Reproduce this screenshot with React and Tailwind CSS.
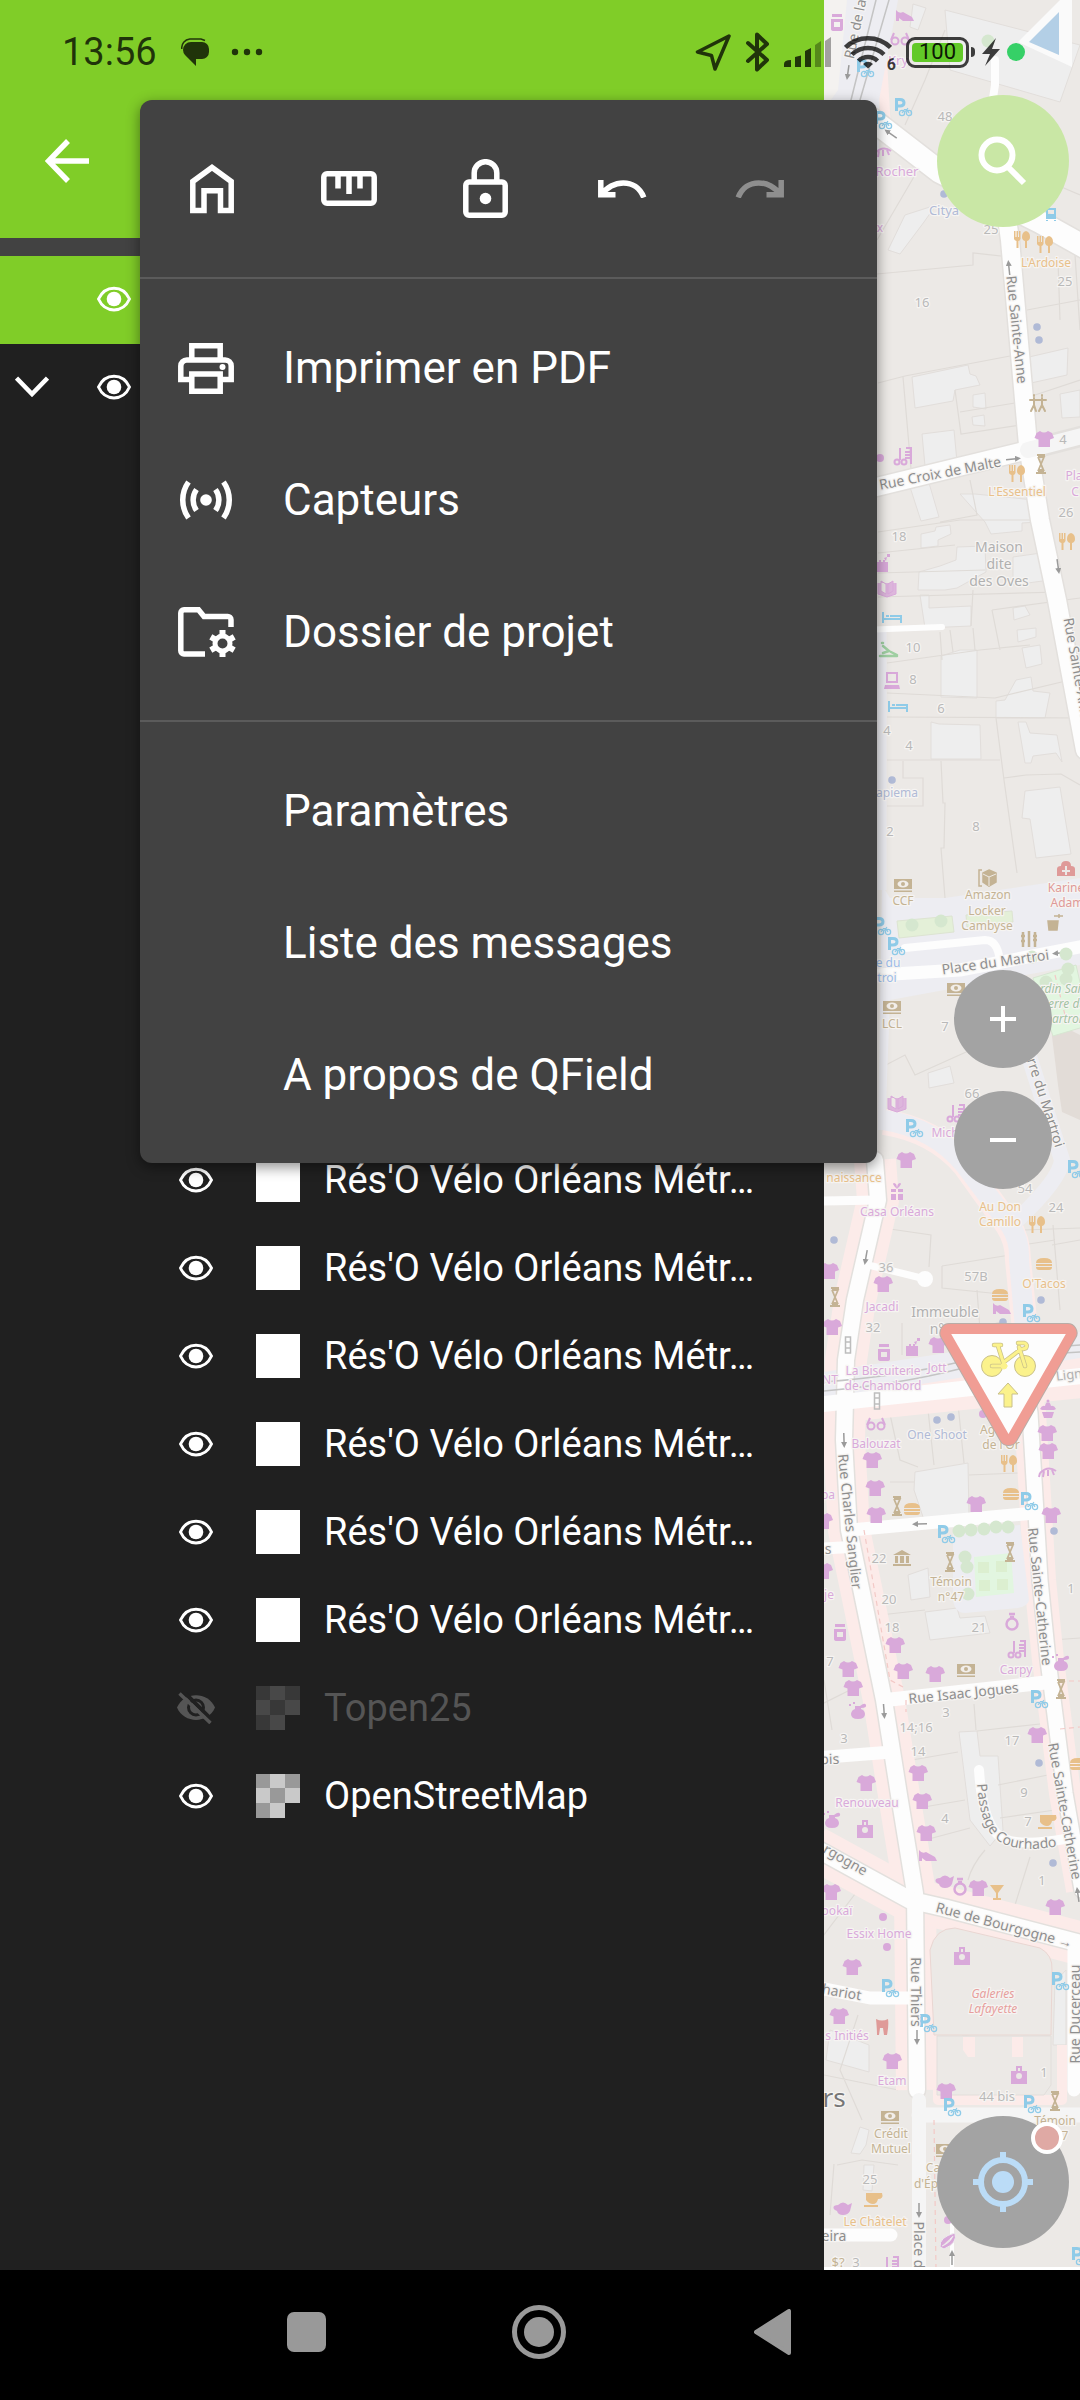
import React from "react";

/* ---------- status bar ---------- */

function StatusBar() {
  return (
    <header className="pointer-events-none absolute inset-x-0 top-0 z-20 flex h-[104px] items-center pl-[62px] pr-[55px] text-black/75">
      <span className="text-[38px] leading-none">13:56</span>
      <svg className="ml-[24px] h-[28px] w-[28px]" viewBox="0 0 28 28" fill="currentColor" aria-label="Message">
        <path d="M10 4H21a7 7 0 0 1 7 7v3a7 7 0 0 1-7 7h-6v7L4 17a8 8 0 0 1-2-5 8 8 0 0 1 8-8z" />
        <path d="M.800 11a9 9 0 0 1 8-10H20l4 1.500" fill="none" stroke="currentColor" strokeWidth="1.500" />
      </svg>
      <svg className="ml-[22px] h-[8px] w-[32px]" viewBox="0 0 32 8" fill="currentColor" aria-label="More notifications">
        <circle cx="4" cy="4" r="3.200" />
        <circle cx="16" cy="4" r="3.200" />
        <circle cx="28" cy="4" r="3.200" />
      </svg>
      <div className="ml-auto flex items-center">
        <svg className="h-[38px] w-[37px]" viewBox="0 0 37 38" fill="none" stroke="currentColor" strokeWidth="3.500" strokeLinejoin="round">
          <path d="M34 3 2.500 19l14 3.500L20 36z" />
        </svg>
        <svg className="ml-[13px] h-[40px] w-[26px]" viewBox="0 0 26 40" fill="none" stroke="currentColor" strokeWidth="4" strokeLinejoin="round" strokeLinecap="round">
          <path d="M3 11l19 17-10 9.500V2.500L22 12 3 29" />
        </svg>
        <svg className="ml-[13px] h-[32px] w-[48px]" viewBox="0 0 48 32" fill="currentColor">
          <path d="M0 31v-3q0-4 7-4v7zM11 31V21l6-1.500V31zM21 31V15l6-3v19z" />
          <path d="M31 31V9l6-4v26zM41 31V5l6-4v30z" opacity=".45" />
        </svg>
        <span className="relative ml-[12px] flex">
          <svg className="h-[34px] w-[48px]" viewBox="0 0 48 34" fill="none" stroke="currentColor" strokeWidth="4.500">
            <path d="M1.500 12.500a32 32 0 0 1 45 0M8 19.500a23 23 0 0 1 32 0M14.500 26a13.500 13.500 0 0 1 19 0" />
            <path d="M24 33.500l-5-4.500q5-4.500 10 0z" fill="currentColor" stroke="none" />
          </svg>
          <span className="absolute -bottom-1 -right-1 text-[16px] font-bold leading-none">6</span>
        </span>
        <span className="ml-[14px] flex items-center">
          <span className="flex h-[31px] w-[63px] items-center rounded-[9px] border-[3px] border-current p-[3px]">
            <span className="flex h-full w-full items-center justify-center rounded-[4px] bg-[#62c928] text-[22px] leading-none text-black/90">100</span>
          </span>
          <span className="ml-[2px] h-[10px] w-[4px] rounded-r bg-current" />
        </span>
        <svg className="ml-[6px] h-[28px] w-[20px]" viewBox="0 0 20 28" fill="currentColor">
          <path d="M15 0 1 16h8L4 28l15-17h-8z" />
        </svg>
        <span className="ml-[6px] h-[18px] w-[18px] rounded-full bg-[#36d067]" />
      </div>
    </header>
  );
}

/* ---------- layer drawer ---------- */

function Eye() {
  return (
    <svg className="h-[26px] w-[34px]" viewBox="0 0 34 26" aria-hidden="true">
      <path d="M1.500 13C8-1.500 26-1.500 32.500 13 26 27.500 8 27.500 1.500 13z" fill="none" stroke="currentColor" strokeWidth="3" />
      <circle cx="17" cy="13" r="7.300" fill="currentColor" />
    </svg>
  );
}

function EyeOff() {
  return (
    <svg className="h-[32px] w-[38px]" viewBox="0 0 38 32" aria-hidden="true">
      <path d="M0 15.500C7-1 31-1 38 15.500 31 32 7 32 0 15.500z" fill="currentColor" />
      <circle cx="19" cy="15.500" r="7.500" fill="none" stroke="#202020" strokeWidth="3" />
      <path d="M5-2 38 31" stroke="#202020" strokeWidth="4" />
      <path d="M2.500 1.500 33.500 31" stroke="currentColor" strokeWidth="3.500" />
    </svg>
  );
}

function Raster({ dim }) {
  const a = dim ? "#383838" : "#999999";
  const b = dim ? "#484848" : "#c9c9c9";
  return (
    <svg className="h-[44px] w-[44px]" viewBox="0 0 44 44" aria-hidden="true" shapeRendering="crispEdges">
      <path d="M0 0h14v14H0zM29 0h15v14H29zM14 14h15v15H14zM0 29h14v15H0z" fill={a} />
      <path d="M14 0h15v14H14zM0 14h14v15H0zM29 14h15v15H29zM14 29h15v15H14z" fill={b} />
    </svg>
  );
}

const layers = [
  ...Array.from({ length: 6 }, () => ({ name: "Rés'O Vélo Orléans Métr…", kind: "plain" })),
  { name: "Topen25", kind: "raster", hidden: true },
  { name: "OpenStreetMap", kind: "raster" },
];

function LayerDrawer() {
  return (
    <aside className="flex w-[76.3%] shrink-0 flex-col bg-[#202020] text-white">
      <div className="flex h-[238px] items-end bg-[#80cd28] pb-[43px] pl-[33px]">
        <button aria-label="Retour" className="flex h-[68px] w-[68px] items-center justify-center">
          <svg className="h-[44px] w-[44px]" viewBox="0 0 44 44" fill="none" stroke="currentColor" strokeWidth="5.500">
            <path d="M44 22H4M23 2 3.500 22 23 42" />
          </svg>
        </button>
      </div>
      <div className="h-[18px] bg-[#424242]" />
      <div className="flex h-[88px] items-center bg-[#80cd28] pb-[2px] pl-[97px]">
        <button aria-label="Visibilité"><Eye /></button>
      </div>
      <div className="flex h-[88px] items-center pb-[2px] pl-[15px]">
        <button aria-label="Replier">
          <svg className="h-[22px] w-[34px]" viewBox="0 0 34 22" fill="none" stroke="currentColor" strokeWidth="4.500">
            <path d="M1.500 2l15.500 16L32.500 2" />
          </svg>
        </button>
        <button aria-label="Visibilité" className="ml-[48px]"><Eye /></button>
      </div>
      <ul className="mt-[704px]">
        {layers.map((l, i) => (
          <li key={i} className={l.hidden ? "flex h-[88px] items-center pl-[176px] text-[#555555]" : "flex h-[88px] items-center pl-[176px]"}>
            <button aria-label="Visibilité" className="flex w-[40px] justify-center">{l.hidden ? <EyeOff /> : <Eye />}</button>
            <span className="ml-[40px] flex">
              {l.kind === "plain" ? <span className="h-[44px] w-[44px] bg-white" /> : <Raster dim={l.hidden} />}
            </span>
            <span className="ml-[24px] truncate text-[38px] leading-[48px]">{l.name}</span>
          </li>
        ))}
      </ul>
    </aside>
  );
}

/* ---------- menu ---------- */

const tools = [
  { label: "Accueil", w: 44, h: 50, d: "M2.800 46.500V17.500L22 3.500 41.200 17.500V46.500H30.500V26.800H14V46.500Z" },
  { label: "Mesurer", w: 56, h: 35, d: "M6 2.800H50a3.200 3.200 0 0 1 3.200 3.200V29a3.200 3.200 0 0 1-3.200 3.200H6A3.200 3.200 0 0 1 2.800 29V6A3.200 3.200 0 0 1 6 2.800ZM17 3V17.500M28 3V23M39 3V17.500" },
  { label: "Verrouiller", w: 45, h: 59, d: "M6 23H39a3.200 3.200 0 0 1 3.200 3.200V53a3.200 3.200 0 0 1-3.200 3.200H6A3.200 3.200 0 0 1 2.800 53V26.200A3.200 3.200 0 0 1 6 23ZM11.200 23V14a11.300 11.300 0 0 1 22.600 0V23", dot: [22.5, 39.5] },
  { label: "Annuler", w: 49, h: 18, d: "M2.800 0V14.800H17.500M4 14.500C13 0 38 -3 45.800 17.500" },
  { label: "Rétablir", w: 49, h: 18, d: "M46.200 0V14.800H31.500M45 14.500C36 0 11 -3 3.200 17.500", disabled: true },
];

function PrintIcon() {
  return (
    <svg width="56" height="51" viewBox="0 0 56 51" fill="none" stroke="currentColor" strokeWidth="5.500" aria-hidden="true">
      <path d="M13.800 17V2.800H42.200V17M13.800 36.500H2.800V23a6 6 0 0 1 6-6H47.200a6 6 0 0 1 6 6V36.500H42.200M13.800 31H42.200V48.200H13.800Z" />
      <circle cx="44.500" cy="24" r="3" fill="currentColor" stroke="none" />
    </svg>
  );
}

function SensorIcon() {
  return (
    <svg width="56" height="40" viewBox="0 0 56 40" fill="none" stroke="currentColor" strokeWidth="5.500" aria-hidden="true">
      <path d="M10.500 2A31 31 0 0 0 10.500 38M45.500 2A31 31 0 0 1 45.500 38M18.500 9.500A18 18 0 0 0 18.500 30.500M37.500 9.500A18 18 0 0 1 37.500 30.500" />
      <circle cx="28" cy="20" r="5.800" fill="currentColor" stroke="none" />
    </svg>
  );
}

function FolderIcon() {
  return (
    <svg width="58" height="51" viewBox="0 0 58 51" fill="none" stroke="currentColor" aria-hidden="true">
      <path d="M27 47H6a3.200 3.200 0 0 1-3.200-3.200V6A3.200 3.200 0 0 1 6 2.800H20.500L26 9.500H49.500A3.200 3.200 0 0 1 53 12.700V20" strokeWidth="5.500" />
      <circle cx="44.500" cy="36.500" r="7.500" strokeWidth="5" />
      <path d="M44.500 23V29M44.500 44V50M32.800 29.800 38 32.800M51 40.200 56.200 43.200M32.800 43.200 38 40.200M51 32.800 56.200 29.800" strokeWidth="6" />
    </svg>
  );
}

function MenuItem({ icon, children }) {
  return (
    <button role="menuitem" className="flex h-[132px] w-full items-center pl-[38px] text-left">
      <span className="flex w-[58px] shrink-0">{icon}</span>
      <span className="ml-[47px] text-[44px] leading-[52px]">{children}</span>
    </button>
  );
}

function Menu() {
  return (
    <div role="menu" className="absolute left-[140px] top-[100px] z-10 w-[737px] rounded-xl bg-[#424242] text-white shadow-[0_4px_14px_rgba(0,0,0,0.45)]">
      <div className="flex h-[177px] pl-[3px]">
        {tools.map((t) => (
          <button key={t.label} aria-label={t.label} disabled={t.disabled} className="flex w-[137px] items-center justify-center disabled:text-[#8e8e8e]">
            <svg width={t.w} height={t.h} viewBox={`0 0 ${t.w} ${t.h}`} fill="none" stroke="currentColor" strokeWidth="5.500" aria-hidden="true">
              <path d={t.d} />
              {t.dot && <circle cx={t.dot[0]} cy={t.dot[1]} r="5.800" fill="currentColor" stroke="none" />}
            </svg>
          </button>
        ))}
      </div>
      <div className="border-y-2 border-[#5b5b5b] pb-[22px] pt-[23px]">
        <MenuItem icon={<PrintIcon />}>Imprimer en PDF</MenuItem>
        <MenuItem icon={<SensorIcon />}>Capteurs</MenuItem>
        <MenuItem icon={<FolderIcon />}>Dossier de projet</MenuItem>
      </div>
      <div className="pb-[22px] pt-[23px]">
        <MenuItem>Paramètres</MenuItem>
        <MenuItem>Liste des messages</MenuItem>
        <MenuItem>A propos de QField</MenuItem>
      </div>
    </div>
  );
}

/* ---------- map ---------- */

const P = "#d9a9da";
const O = "#e8c08a";
const B = "#c4b394";
const S = "#8fcbe8";
const D = "#b0bad6";
const G = "#8e8e8e";
const N = "#b9b9b9";

const glyphs = {
  shirt: <path d="M-4-8q4 3 8 0l4 2 2 5-4 1.500V8H-5.500V.500l-4-1.500 2-5z" fill={P} />,
  fork: (
    <g fill={O}>
      <path d="M-8-8h1.500v6h1V-8h1.500v6h1V-8H-1.500v8q-1 2-2 2V9h-2V2q-2-.500-2.500-2z" />
      <path d="M4-8q4 1 4 6 0 3-3 4V9H3V2Q0 1 0-2q0-5 4-6z" />
    </g>
  ),
  park: (
    <g fill="none" stroke={S}>
      <path d="M-6.500 4V-7.500h3.500q4 0 4 3.200t-4 3.200H-6" strokeWidth="3" />
      <circle cx="-1" cy="6" r="2.600" strokeWidth="1.300" />
      <circle cx="6" cy="6" r="2.600" strokeWidth="1.300" />
      <path d="M-1 6 1.500 2.500H4L6 6M1.500 5.500 5 1" strokeWidth="1.200" />
    </g>
  ),
  dot: <circle r="3.800" fill={D} />,
  pdot: <circle r="4" fill={P} />,
  burger: <path d="M-8-1q0-5 8-5t8 5zM-8 0H8v2H-8zM-8 3H8q0 3-3 3H-5q-3 0-3-3z" fill={O} />,
  obelisk: <path d="M-4-9H4M-3-7 3-7-2.500 6h5L-3-7M-3 7H3M-5 9H5" fill="none" stroke={B} strokeWidth="1.800" />,
  bank: (
    <g>
      <path d="M-9-6H9V4H-9zM-9 5.500H9V7H-9z" fill={B} />
      <ellipse cy="-1" rx="5.500" ry="3.500" fill="#f2eeea" />
      <circle cy="-1" r="2" fill={B} />
    </g>
  ),
  book: <path d="M-6-7-1-4V6L-6 3zM6-7 1-4V6l5-3zM-9-5V6l9 3 9-3V-5" fill={P} stroke={P} strokeWidth="1" fillOpacity=".8" />,
  hair: (
    <g fill="none" stroke={P} strokeWidth="2">
      <path d="M-3-8V4M3-8H8V8M2-4H7M2-1H7M2 2H7" />
      <circle cx="-6" cy="6" r="2.500" />
      <circle cx="1" cy="6" r="2.500" />
    </g>
  ),
  bed: <path d="M-9-5V6M-9 2H9M9 6V-1H-2M-6-1H-3" fill="none" stroke={S} strokeWidth="2" />,
  laptop: <path d="M-6-8H6V3H-6zM-4-6V1H4V-6zM-7 5H7L8 9H-8z" fill={P} fillRule="evenodd" />,
  people: <path d="M-4-8v1M4-8v1M-8-3H8M-4-5V2L-7 8M-4 2l2 6M4-5V2L1 8M4 2 7 8" fill="none" stroke={B} strokeWidth="2" strokeLinecap="round" />,
  slide: <path d="M-7-7l1 0M-6-4 0 1-6 3M-9 6H8M2 2 8 5" fill="none" stroke="#9fcfa2" strokeWidth="2.500" strokeLinecap="round" />,
  luggage: <path d="M-6-1h3V-3H3V-1H6V9H-6zM-1-3h2V-1H-1zM5-9h3v3H5zM2-5l3-1-1 4z" fill={P} fillRule="evenodd" />,
  gift: <path d="M-6-3H-1V0H-6zM1-3H6V0H1zM-6 2H-1V8H-6zM1 2H6V8H1zM0-3q-6-6-3-6t3 6q0-6 3-6T0-3" fill={P} />,
  bag: <path d="M-8-4h5V-9H3v5H8V9H-8zM-1-4H1V-7H-1zM-3 1a3 3 0 1 0 6 0 3 3 0 1 0-6 0z" fill={P} fillRule="evenodd" />,
  perfume: <path d="M-7 3a6 6 0 0 1 4-5V-5H2q5-4 6-1T3-3V-2a6 6 0 0 1 4 5q0 5-7 5T-7 3zM-9-7h2v2h-2zM-5-9h2v2h-2z" fill={P} />,
  ring: (
    <g fill="none" stroke={P} strokeWidth="2.500">
      <circle cy="3" r="5.500" />
      <path d="M-3-7H3M-2-4H2" />
    </g>
  ),
  tea: <path d="M-5-3Q0-8 5-3L9-5 7 3Q5 7 0 7T-6 3q-5-2-3-5 2-1 4-1z" fill={P} />,
  cup: <path d="M-7-7H9q2 6-4 6-1 5-5 5t-7-4zM-9 5H5V7H-9z" fill={O} />,
  cake: <path d="M-8-1q2-4 5-3 1-4 3-4t3 4q3-1 5 3L6 0H-6zM-6 2H6L4 8H-4zM-1.500-9a1.500 1.500 0 1 0 3 0 1.500 1.500 0 1 0-3 0z" fill={P} />,
  cocktail: <path d="M-7-7H7L1 1V6H4V8H-4V6h3V1z" fill={O} />,
  bean: <path d="M-8 6Q-9-4 7-8 10 2-4 8zM-6 5Q2 2 5-5" fill={P} stroke="#eeeeee" strokeWidth="1" />,
  jar: <path d="M-5-8H5v3H-5zM-6-3H6V7q0 2-3 2H-3Q-6 9-6 7zM-3 0V5H3V0z" fill={P} fillRule="evenodd" />,
  shoe: <path d="M-9-6q3 4 7 2l9 5 2 4H-2L-6 2V5H-9z" fill={P} />,
  museum: <path d="M0-8 9-3H-9zM-7-2H-4V5H-7zM-2-2H2V5H-2zM4-2H7V5H4zM-9 6H9V8H-9z" fill={B} />,
  glasses: (
    <g fill="none" stroke={P} strokeWidth="2">
      <circle cx="-5" cy="2" r="3.500" />
      <circle cx="5" cy="2" r="3.500" />
      <path d="M-9 1-6-6M9 1 6-6" />
    </g>
  ),
  tree: <circle r="6.500" fill="#d5e7cf" />,
  signal: <path d="M-2.500-8H2.500V8H-2.500zM-2.500-3H2.500M-2.500 3H2.500" fill="none" stroke="#bdbdbd" strokeWidth="1.500" />,
  lash: <path d="M-8 1Q0-7 8-1M-8 1l-1 4M-4-1l-1 6M0-2V4M4-2l2 5" fill="none" stroke={P} strokeWidth="2" />,
  bus: <path d="M-5-6H5V5H-5zM-3-4V0H3V-4zM-5 6h2v1h-2zM3 6h2v1H3z" fill={S} fillRule="evenodd" />,
  tooth: <path d="M-6-8q6 3 12 0 1 6-1 16H2L1 1H-2l-1 7H-5Q-5 2-6-8z" fill="#df9a98" />,
  medic: <path d="M-9 7V0q0-3 4-3 0-5 5-5t5 5q4 0 4 3V7zM-1-3V1H-4V3H-1V6H1V3H4V1H1V-3z" fill="#df9a98" fillRule="evenodd" />,
  box: (
    <g stroke={B} strokeWidth="1.500">
      <path d="M-6-8h-3V8h3" fill="none" />
      <path d="M1-8 8-5V4L1 8-5 4V-5z" fill={B} />
      <path d="M-5-4 1-1 8-4M1-1V8" fill="none" stroke="#eeeae6" strokeWidth="1" />
    </g>
  ),
  toilets: <path d="M-6-7V8M0-8V8M6-7V8M-8-3H-4M4-3H8M-8 2h4M4 1h4" fill="none" stroke={B} strokeWidth="2.500" />,
  tap: <path d="M-8 0H2L1 9H-7zM-2-5H7M3-7V-3" fill={B} stroke={B} strokeWidth="1.500" />,
};

const marks = [
  ["shirt", 1044, 439], ["shirt", 906, 1160], ["shirt", 829, 1271], ["shirt", 883, 1284], ["shirt", 832, 1327],
  ["shirt", 938, 1345], ["shirt", 872, 1460], ["shirt", 875, 1488], ["shirt", 876, 1515], ["shirt", 976, 1504],
  ["shirt", 1047, 1433], ["shirt", 1048, 1451], ["shirt", 1051, 1515], ["shirt", 823, 1521], ["shirt", 823, 1571],
  ["shirt", 895, 1645], ["shirt", 903, 1671], ["shirt", 935, 1674], ["shirt", 848, 1669], ["shirt", 853, 1688],
  ["shirt", 1037, 1735], ["shirt", 918, 1773], ["shirt", 922, 1801], ["shirt", 926, 1833], ["shirt", 866, 1783],
  ["shirt", 978, 1888], ["shirt", 831, 1892], ["shirt", 1055, 1907], ["shirt", 852, 1967], ["shirt", 839, 2016],
  ["shirt", 892, 2061], ["shirt", 946, 2091],
  ["park", 903, 107], ["park", 883, 120], ["park", 865, 68], ["park", 882, 926], ["park", 896, 946], ["park", 914, 1128],
  ["park", 1076, 1169], ["park", 1031, 1313], ["park", 1029, 1501], ["park", 946, 1534], ["park", 1039, 1699],
  ["park", 890, 1988], ["park", 928, 2023], ["park", 952, 2107], ["park", 1032, 2104], ["park", 1060, 1981], ["park", 1080, 2256],
  ["fork", 1022, 239], ["fork", 1045, 244], ["fork", 1017, 473], ["fork", 1067, 541], ["fork", 1037, 1224], ["fork", 1009, 1463],
  ["dot", 1037, 327], ["dot", 1039, 340], ["dot", 944, 194], ["dot", 892, 780], ["dot", 834, 1240], ["dot", 1041, 1300],
  ["dot", 937, 1420], ["dot", 951, 1417], ["dot", 1054, 1531], ["dot", 1039, 1763], ["dot", 1053, 1863], ["dot", 1003, 1322],
  ["pdot", 880, 458], ["pdot", 883, 1917], ["pdot", 887, 1947], ["pdot", 948, 2220], ["pdot", 983, 1414],
  ["burger", 1044, 1264], ["burger", 1000, 1295], ["burger", 912, 1509], ["burger", 1011, 1494], ["burger", 1078, 1764],
  ["obelisk", 1041, 464], ["obelisk", 835, 1297], ["obelisk", 897, 1506], ["obelisk", 950, 1562], ["obelisk", 1010, 1552],
  ["obelisk", 1061, 1689], ["obelisk", 1055, 2101], ["people", 1038, 403],
  ["bank", 903, 885], ["bank", 892, 1007], ["bank", 956, 989], ["bank", 966, 1670], ["bank", 890, 2117], ["bank", 945, 2150],
  ["book", 887, 588], ["book", 897, 1103], ["hair", 903, 456], ["hair", 956, 1113], ["hair", 1017, 1649], ["hair", 890, 2265],
  ["bed", 892, 617], ["bed", 898, 706], ["laptop", 892, 680], ["slide", 889, 650], ["luggage", 882, 563], ["luggage", 912, 1347],
  ["gift", 897, 1192], ["bag", 962, 1956], ["bag", 1019, 2075],
  ["bag", 865, 1829], ["jar", 884, 1352], ["jar", 840, 1632], ["perfume", 858, 1711], ["perfume", 832, 1820], ["perfume", 1061, 1663],
  ["ring", 1012, 1621], ["ring", 960, 1886], ["tea", 945, 1881], ["tea", 843, 2208], ["cup", 1047, 1822], ["cup", 873, 2200],
  ["cocktail", 997, 1892], ["shoe", 928, 1856], ["shoe", 1002, 1309], ["shoe", 905, 16], ["museum", 902, 1558],
  ["glasses", 876, 1424], ["glasses", 900, 39], ["jar", 837, 22], ["bus", 1051, 214], ["tooth", 882, 2027], ["medic", 1066, 869],
  ["box", 988, 878], ["toilets", 1029, 939], ["tap", 1056, 921], ["signal", 848, 1345], ["signal", 877, 1401],
  ["lash", 883, 152], ["lash", 1048, 1472], ["cake", 1048, 1410], ["bean", 948, 2241], ["tree", 988, 41], ["tree", 912, 925], ["tree", 941, 921],
  ["tree", 1032, 957], ["tree", 1066, 954], ["tree", 1068, 969], ["tree", 1046, 982], ["tree", 1066, 979],
  ["tree", 959, 1531], ["tree", 971, 1530], ["tree", 984, 1529], ["tree", 996, 1527], ["tree", 1008, 1527],
  ["tree", 965, 1557], ["tree", 967, 1567], ["tree", 968, 1594],
];

/* text, centre x, baseline y, size, colour, rotation */
const labels = [
  ["48", 945, 121, 13, N], ["16", 922, 307, 13, N], ["25", 991, 234, 13, N], ["25", 1065, 286, 13, N],
  ["4", 1063, 444, 13, N], ["26", 1066, 517, 13, N], ["18", 899, 541, 13, N], ["10", 913, 652, 13, N],
  ["8", 913, 684, 13, N], ["6", 941, 713, 13, N], ["4", 887, 735, 13, N], ["4", 909, 750, 13, N], ["2", 890, 836, 13, N],
  ["8", 976, 831, 13, N], ["7", 945, 1031, 13, N], ["66", 972, 1098, 13, N], ["54", 1025, 1193, 13, N], ["24", 1056, 1212, 13, N],
  ["57B", 976, 1281, 13, N], ["36", 886, 1272, 13, N], ["32", 873, 1332, 13, N], ["22", 879, 1563, 13, N],
  ["20", 889, 1604, 13, N], ["18", 892, 1632, 13, N], ["21", 979, 1632, 13, N], ["1", 1071, 1593, 13, N],
  ["7", 830, 1666, 13, N], ["3", 946, 1717, 13, N], ["14;16", 916, 1732, 13, N], ["14", 918, 1756, 13, N],
  ["3", 844, 1743, 13, N], ["17", 1012, 1745, 13, N], ["9", 1024, 1797, 13, N], ["7", 1028, 1826, 13, N],
  ["4", 945, 1823, 13, N], ["1", 1042, 1885, 13, N], ["1", 1044, 2077, 13, N], ["44 bis", 997, 2101, 13, N],
  ["25", 870, 2184, 13, N], ["3", 856, 2267, 13, N],
  ["Kry", 898, 65, 13, P], ["Rocher", 897, 176, 13, P], ["Citya", 944, 215, 13, D], ["x", 880, 232, 12, P],
  ["L'Ardoise", 1046, 267, 12, O], ["L'Essentiel", 1017, 496, 12, O], ["Pla", 1074, 480, 12, P], ["C", 1075, 496, 12, P],
  ["Maison", 999, 552, 14, "#b0b0b0"], ["dite", 999, 569, 14, "#b0b0b0"], ["des Oves", 999, 586, 14, "#b0b0b0"],
  ["apiema", 897, 797, 12, D], ["CCF", 903, 905, 12, B], ["Amazon", 988, 899, 12, B], ["Locker", 987, 915, 12, B],
  ["Cambyse", 987, 930, 12, B], ["Karine", 1066, 892, 12, "#df9a98"], ["Adam", 1067, 907, 12, "#df9a98"],
  ["e du", 888, 967, 12, "#9dbdea"], ["troi", 887, 982, 12, "#9dbdea"], ["LCL", 892, 1028, 12, B],
  ["Michel", 950, 1137, 12, P], ["naissance", 854, 1182, 12, O], ["Casa Orléans", 897, 1216, 12, P],
  ["Au Don", 1000, 1211, 12, O], ["Camillo", 1000, 1226, 12, O], ["O'Tacos", 1044, 1288, 12, O], ["Jacadi", 882, 1311, 12, P],
  ["Immeuble", 945, 1317, 14, "#b0b0b0"], ["n°", 937, 1334, 14, "#b0b0b0"],
  ["La Biscuiterie", 883, 1375, 12, P], ["Jott", 937, 1372, 12, P], ["de Chambord", 883, 1390, 12, P], ["NT", 830, 1384, 12, P],
  ["One Shoot", 937, 1439, 12, D], ["Balouzat", 876, 1448, 12, P], ["pa", 828, 1499, 12, P],
  ["Agence", 1001, 1434, 12, B], ["de l'Or", 1001, 1449, 12, B],
  ["Témoin", 951, 1586, 12, B], ["n°47", 951, 1601, 12, B], ["je", 829, 1599, 12, P], ["Carpy", 1016, 1674, 12, P],
  ["Renouveau", 867, 1807, 12, P], ["ookaï", 837, 1915, 12, P], ["Essix Home", 879, 1938, 12, P],
  ["s Initiés", 847, 2040, 12, P], ["Etam", 892, 2085, 12, P], ["Crédit", 891, 2138, 12, B], ["Mutuel", 891, 2153, 12, B],
  ["Le Châtelet", 875, 2226, 12, O], ["Témoin", 1055, 2125, 12, B], ["7", 1065, 2140, 12, B], ["Ca", 933, 2172, 12, B],
  ["d'Ép", 926, 2188, 12, B], ["$?", 838, 2267, 13, B],
  ["Rue de la", 860, 30, 14, G, -78],
  ["Rue Sainte-Anne", 1012, 330, 14, G, 84], ["Rue Croix de Malte", 941, 478, 14, G, -11], ["Rue Sainte-Anne", 1073, 672, 14, G, 80],
  ["Place du Martroi", 996, 967, 14, G, -8], ["rre du Martroi", 1041, 1104, 14, G, 72],
  ["Rue Charles Sanglier", 845, 1522, 14, G, 84],
  ["Ligne A", 1079, 1378, 13, "#b0b0b0", -7], ["s", 828, 1554, 14, G], ["Rue Isaac Jogues", 964, 1698, 14, G, -6],
  ["Rue Sainte-Catherine", 1035, 1597, 14, G, 84], ["Rue Sainte-Catherine", 1060, 1812, 14, G, 80],
  ["ois", 830, 1764, 14, G, -2], ["rgogne", 843, 1864, 14, G, 30], ["Rue de Bourgogne →", 1003, 1930, 14, G, 15],
  ["hariot", 841, 1997, 14, G, 10], ["Rue Thiers", 911, 1992, 14, G, 90], ["Rue Ducerceau", 1080, 2014, 14, G, -90],
  ["eira", 834, 2241, 14, G], ["Place d", 914, 2245, 14, G, 90], ["rs", 834, 2107, 26, "#777777"],
];

const arrows = [
  [891, 134, 215], [1009, 268, 264], [1013, 459, -6], [1058, 566, 82], [1060, 953, 175], [866, 1257, 100],
  [844, 1440, 88], [920, 1524, 178], [884, 1711, 86], [917, 2037, 90], [919, 2210, 90], [848, 72, 98], [1078, 1895, 262],
  [952, 2258, 270],
];

const mainRoads =
  "M875 1160 878 1200 855 1300 846 1360 844 1440 849 1530 884 1700 899 1795 915 1893 917 2090";
const catherine = "M1027 1395 1030 1413 1040 1580 1048 1660 1065 1793 1082 1890";
const bourgogne = "M815 1848 910 1900 945 1908 1090 1946";

const blocks = [
  "M912 377 968 365 970 374 976 376 980 385 955 390 953 401 915 408z",
  "M922 434 954 430 957 462 925 466z", "M973 395 985 393 986 409 973 407z", "M972 417 984 415 985 426 973 425z",
  "M1029 357 1068 348 1067 375 1031 383z", "M1060 394 1080 390 1080 417 1062 418z",
  "M910 487 929 483 939 517 921 521z", "M960 494 975 494 1034 500 1038 522 1022 523 1022 531 991 534 985 522z",
  "M921 534 935 531 936 527 950 525 951 534 938 540 938 546 921 548z",
  "M919 572 940 566 956 560 957 547 985 546 986 572 957 588 945 590 918 590z",
  "M1013 557 1048 552 1050 580 1013 585z", "M920 595 929 595 929 608 971 606 971 626 925 628z",
  "M1013 608 1025 606 1030 615 1014 620z", "M1017 630 1036 628 1036 637 1018 642z", "M1022 648 1040 645 1042 664 1026 668z",
  "M941 656 960 650 977 650 977 698 941 697z", "M1016 680 1031 677 1033 691 1050 693 1045 718 996 718 996 701 1005 700z",
  "M931 722 939 724 980 725 981 759 931 759z", "M1018 722 1026 722 1030 733 1057 735 1062 762 1056 753 1033 756 1031 763 1025 763z",
  "M1025 791 1060 787 1071 854 1036 858 1030 819 1022 818z", "M928 1073 950 1066 954 1083 929 1088z",
  "M915 1472 968 1463 969 1515 924 1520 914 1490z", "M908 1575 928 1568 930 1597 911 1600z",
  "M925 1612 957 1608 960 1618 985 1616 990 1633 930 1640z", "M959 1732 977 1731 980 1756 998 1756 1003 1830 990 1846 970 1820z",
  "M913 4 926 8 918 30 910 27z", "M945 10 1080 45 1060 102 950 70z", "M936 205 924 222 900 254 888 250 905 215z",
  "M830 2030 869 2045 869 2072 826 2060z", "M860 2127 869 2130 866 2145 860 2154 851 2153z", "M864 2165 874 2165 872 2191 863 2190z",
  "M963 2035 975 2037 975 2056 965 2059z", "M1012 2037 1023 2037 1022 2058 1012 2056z", "M1055 1982 1066 1970 1066 2045 1053 2045z",
];

const parcels =
  "M877 274 973 265 973 253 1010 257M878 383 905 376 1010 356M903 377 912 480M955 390 961 434 1020 425M960 412 1015 403M1027 310 1080 300M1035 395 1080 380M970 480 977 515 940 522M878 532 960 520 1040 520M878 553 955 545M878 573 985 570M878 597 1060 592M971 626 973 590M992 610 1080 598M992 610 1000 650M940 632 942 660M950 630 953 652M973 628 975 650M887 663 980 650 1030 645M887 693 995 698 1070 680M887 717 1080 718M887 760 1000 760M996 718 1004 780 1017 873M941 761 943 803 945 803 944 848 941 848 945 898M903 761V778H923V806H887M1004 778 1026 775 1061 774 1080 785M884 1066 905 1055 915 1075 975 1048M890 1229 931 1235 929 1267M942 1266 1010 1255M942 1266V1288L1010 1295M902 1323V1355M977 1290 980 1330M888 1405 900 1460 918 1467M928 1410 934 1465M958 1404 964 1463M969 1475 1018 1473M890 1482 914 1482M1022 1245 1055 1240M1053 1225 1060 1310M1024 1230 1080 1228M1052 1245 1080 1240M880 1615 925 1610M1052 1640 1080 1638M912 1760 958 1752M918 1808 965 1800M925 1840 970 1828M974 1704 976 1730M977 1731 1040 1724M998 1785 1048 1775M1000 1818 1055 1810M1030 1857 1015 1905M985 1850Q972 1865 968 1880M830 1880 855 1894 820 1940M824 1680 832 1730M820 1705 850 1690M934 2038 1050 2036M975 2037V2094M1012 2037V2094M837 2165 862 2160 898 2165M834 2164 830 2215M858 2015 840 2070 862 2120M824 2075 898 2090M1045 180 1080 195M1058 260 1060 320M1075 255 1080 330M877 240 915 175M1000 1322 960 1335M905 125 925 80 945 30";

function BikeSign() {
  return (
    <g>
      <path d="M950 1329H1067a4 4 0 0 1 4 6L1012 1438a4 4 0 0 1-7 0L946 1335a4 4 0 0 1 4-6z" fill="#fdfdfd" stroke="#b9aca6" strokeWidth="12" strokeLinejoin="round" />
      <path d="M950 1329H1067a4 4 0 0 1 4 6L1012 1438a4 4 0 0 1-7 0L946 1335a4 4 0 0 1 4-6z" fill="#fdfdfd" stroke="#f09d94" strokeWidth="10" strokeLinejoin="round" />
      <g stroke="#c9c08a" strokeWidth="1" fill="#fbf28c">
        <circle cx="992" cy="1366" r="10.500" />
        <circle cx="1025" cy="1366" r="10.500" />
        <path d="M1008 1383 1018 1394H1012V1407H1004V1394H998z" />
      </g>
      <g fill="none" strokeLinecap="round" strokeLinejoin="round">
        <path d="M994 1345H1001M998 1346 1004 1365M1004 1362 1021 1349M1025 1366 1019 1347M1018 1343H1024q4 1 2 5l-3 1M992 1366H1004" stroke="#c9c08a" strokeWidth="4.500" />
        <path d="M994 1345H1001M998 1346 1004 1365M1004 1362 1021 1349M1025 1366 1019 1347M1018 1343H1024q4 1 2 5l-3 1M992 1366H1004" stroke="#fbf28c" strokeWidth="3" />
        <circle cx="1004" cy="1366" r="3" fill="#fbf28c" stroke="#fbf28c" />
      </g>
    </g>
  );
}

function MapCanvas() {
  return (
    <svg className="absolute inset-0 h-full w-full" viewBox="824 0 256 2270" preserveAspectRatio="xMinYMin slice" aria-label="Carte" fontFamily='"Noto Sans", sans-serif'>
      <rect x="824" y="0" width="256" height="2270" fill="#ece9e6" />
      <path d={blocks.join("")} fill="#eeeeee" stroke="#e2dedb" strokeWidth="1" />
      <path d={parcels} fill="none" stroke="#dfdbd7" strokeWidth="1.200" />

      {/* pavements and shopping streets */}
      <g fill="none" stroke="#fcebe9" strokeLinejoin="round">
        <path d={mainRoads} strokeWidth="42" />
        <path d={catherine} strokeWidth="32" />
        <path d={bourgogne} strokeWidth="44" />
        <path d="M815 1402 1090 1374" strokeWidth="46" />
        <path d="M882 60 886 130" strokeWidth="10" />
        <path d="M884 1122Q935 1130 965 1165L1008 1225Q1018 1240 1018 1260L1026 1340" strokeWidth="26" />
        <path d="M938 2040V2100H1062V2045" strokeWidth="10" />
      </g>
      <path d="M930 1950Q935 1928 955 1928L1040 1948Q1053 1955 1052 1970L1051 2035H934z" fill="#ece9e6" stroke="#ead6d2" />
      <path d="M937 2036H1051V2085L1044 2095H937z" fill="#ece9e6" stroke="#e2dedb" />
      <path d="M963 2037H975V2057H968L963 2050zM1012 2037H1023V2057H1012z" fill="#fcebe9" />

      {/* pedestrian surfaces */}
      <g fill="#ededf2">
        <path d="M847 0H898L879 100V160H824V100z" />
        <path d="M882 885 890 898 945 898 1080 878V965L890 1000 885 1130 878 1130z" />
        <path d="M824 1372 1080 1332V1358L824 1400z" />
        <path d="M953 1530 1020 1525 1029 1600Q1028 1606 1018 1608L965 1613Q955 1613 953 1600z" />
      </g>
      <path d="M824 0H847L838 90 824 110z" fill="#f4f2f0" />
      <g fill="none" stroke="#ededf2" strokeLinejoin="round">
        <path d="M884 1120Q935 1128 965 1165L1010 1225Q1020 1240 1019 1260L1026 1340" strokeWidth="20" />
        <path d="M1027 1050 1062 1160Q1060 1180 1015 1222" strokeWidth="16" />
        <path d="M882 630V890" strokeWidth="9" />
      </g>
      <path d="M1050 1020 1080 1035V1120L1062 1112 1058 1085z" fill="#e2dcd7" />
      <g fill="#e4f0d8" stroke="#dde4d2">
        <path d="M897 921 952 916 954 932 899 938z" />
        <path d="M966 915 1012 911 1013 922 967 927z" />
      </g>
      <path d="M1033 978 1076 965 1090 1025 1053 1036z" fill="#e2f6e0" stroke="#d7e6d2" />
      <path d="M974 1557 1011 1553 1014 1593 976 1597z" fill="#e2f6e0" />
      <path d="M978 1562h11v11h-11zM996 1561h11v11h-11zM979 1580h11v11h-11zM997 1579h11v11h-11z" fill="#dcefd0" />

      {/* roads */}
      <g fill="none" strokeLinejoin="round" strokeLinecap="round">
        <g stroke="#e3e0dd">
          <path d="M870 118 940 172 1040 222 1090 250" strokeWidth="25" />
          <path d="M1003 190 1010 240 1028 445 1040 520 1057 600 1085 750" strokeWidth="21" />
          <path d="M860 491 1028 450 1090 434" strokeWidth="21" />
          <path d={mainRoads} strokeWidth="19" />
          <path d={catherine} strokeWidth="18" />
          <path d={bourgogne} strokeWidth="20" />
        </g>
        <g stroke="#fdfdfd">
          <path d="M870 118 940 172 1040 222 1090 250" strokeWidth="22" />
          <path d="M985 150 995 85V60" strokeWidth="8" />
          <path d="M1003 190 1010 240 1028 445 1040 520 1057 600 1085 750" strokeWidth="18" />
          <path d="M860 491 1028 450" strokeWidth="18" />
          <path d="M1028 450 1090 434" strokeWidth="16" stroke="#f5f5f5" />
          <path d="M860 630 942 627" strokeWidth="6" />
          <path d="M860 976 960 970 1090 945" strokeWidth="13" />
          <path d="M905 948 985 940Q998 940 1000 962" strokeWidth="8" />
          <path d="M824 1201 878 1200" strokeWidth="9" />
          <path d="M868 1265 905 1274 925 1279" strokeWidth="7" />
          <circle cx="925" cy="1279" r="5" strokeWidth="6" />
          <path d={mainRoads} strokeWidth="16" />
          <path d={catherine} strokeWidth="15" />
          <path d={bourgogne} strokeWidth="17" />
          <path d="M815 1405 1090 1375" strokeWidth="16" />
          <path d="M851 1530 1035 1513" strokeWidth="13" />
          <path d="M815 1549 850 1547" strokeWidth="12" />
          <path d="M886 1700 1050 1682" strokeWidth="14" />
          <path d="M815 1758 892 1752" strokeWidth="13" />
          <path d="M979 1770Q982 1815 995 1832T1065 1839" strokeWidth="10" />
          <path d="M815 1987 870 1998H915" strokeWidth="13" />
          <path d="M1074 1950V2090" strokeWidth="13" />
          <path d="M919 2115H1090" strokeWidth="15" stroke="#f5f5f5" />
          <path d="M919 2100V2280" strokeWidth="14" stroke="#f5f5f5" />
          <path d="M815 2235H891" strokeWidth="13" />
          <path d="M952 2190V2280" strokeWidth="4" />
        </g>
        <g stroke="#f3c9c6" strokeWidth="1.200" strokeDasharray="5 4" strokeLinecap="butt">
          <path d="M864 1530 890 1680 903 1687M906 1700V1712M934 2120 936 2270M1060 1681H1080M1060 1729 1080 1727" />
          <path d="M1055 975 1065 1015" />
        </g>
        <g stroke="#c4c4c4" strokeWidth="1.500">
          <path d="M876 0 851 100M889 0 860 100" />
          <path d="M824 1382Q900 1376 955 1363T1080 1345M824 1391Q900 1384 955 1370T1080 1352" />
        </g>
      </g>

      {arrows.map(([x, y, r], i) => (
        <path key={i} d="M-7 0H3" transform={`translate(${x} ${y}) rotate(${r})`} stroke="#9a9a9a" strokeWidth="1.500" markerEnd="url(#tip)" />
      ))}
      <defs>
        <marker id="tip" viewBox="0 0 6 6" refX="1" refY="3" markerWidth="4" markerHeight="4" orient="auto">
          <path d="M0 0 6 3 0 6z" fill="#9a9a9a" />
        </marker>
        <path id="passage" d="M977 1784Q980 1830 1000 1842T1064 1845" />
      </defs>

      {marks.map(([k, x, y], i) => (
        <g key={i} transform={`translate(${x} ${y})`}>{glyphs[k]}</g>
      ))}

      <g textAnchor="middle" stroke="#f6f4f2" strokeWidth="2.500" strokeLinejoin="round" paintOrder="stroke">
        {labels.map(([t, x, y, s, c, r], i) => (
          <text key={i} x={x} y={y} fontSize={s} fill={c} transform={r ? `rotate(${r} ${x} ${y})` : undefined}>{t}</text>
        ))}
        <g fontStyle="italic" fontSize="12" fill="#e79f9d">
          <text x="993" y="1998">Galeries</text>
          <text x="993" y="2013">Lafayette</text>
        </g>
        <g fontStyle="italic" fontSize="12" fill="#a3c3a3" textAnchor="start">
          <text x="1040" y="993">rdin Sai</text>
          <text x="1048" y="1008">erre du</text>
          <text x="1052" y="1023">artroi</text>
        </g>
      </g>
      <text fontSize="14" fill={G} stroke="#f6f4f2" strokeWidth="2.500" paintOrder="stroke">
        <textPath href="#passage">Passage Courhado</textPath>
      </text>

      {/* direction marker and cycling sign */}
      <path d="M1072-12V67L1018 42z" fill="#fafafa" />
      <path d="M1059 12V55L1029 42z" fill="#b3cfe6" />
      <BikeSign />
      <rect x="824" y="2267" width="256" height="3" fill="#ffffff" />
    </svg>
  );
}

function MapPane() {
  return (
    <main className="relative min-w-0 flex-1 overflow-hidden">
      <MapCanvas />
      <div className="absolute inset-y-0 right-[11px] flex flex-col items-center pb-[22px] pt-[95px]">
        <button aria-label="Rechercher" className="flex h-[132px] w-[132px] items-center justify-center rounded-full bg-[#c9e7a5] text-white">
          <svg className="h-[50px] w-[50px]" viewBox="0 0 50 50" fill="none" stroke="currentColor" strokeWidth="6">
            <circle cx="19" cy="19" r="15.500" />
            <path d="M30 31 46 47" />
          </svg>
        </button>
        <button aria-label="Zoom avant" className="mt-[743px] flex h-[98px] w-[98px] items-center justify-center rounded-full bg-[#a3a3a3] text-white">
          <svg className="h-[26px] w-[26px]" viewBox="0 0 26 26" stroke="currentColor" strokeWidth="4"><path d="M13 0V26M0 13H26" /></svg>
        </button>
        <button aria-label="Zoom arrière" className="mt-[23px] flex h-[98px] w-[98px] items-center justify-center rounded-full bg-[#a3a3a3] text-white">
          <svg className="h-[26px] w-[26px]" viewBox="0 0 26 26" stroke="currentColor" strokeWidth="4"><path d="M0 13H26" /></svg>
        </button>
        <button aria-label="Position" className="relative mt-auto flex h-[132px] w-[132px] items-center justify-center rounded-full bg-[#a3a3a3] text-[#bbdcf7]">
          <svg className="h-[60px] w-[60px]" viewBox="0 0 60 60" fill="none" stroke="currentColor" strokeWidth="6">
            <circle cx="30" cy="30" r="22" />
            <path d="M30 0V8M30 52V60M0 30H8M52 30H60" />
            <circle cx="30" cy="30" r="11" fill="currentColor" stroke="none" />
          </svg>
          <span className="absolute right-[6px] top-[6px] h-[32px] w-[32px] rounded-full border-4 border-white bg-[#dfa9a4]" />
        </button>
      </div>
    </main>
  );
}

/* ---------- system navigation ---------- */

function NavBar() {
  return (
    <nav className="flex h-[130px] items-center justify-center bg-black pb-[6px] pr-[2px] text-[#999999]">
      <button aria-label="Applications récentes" className="flex w-[233px] justify-center">
        <span className="h-[40px] w-[39px] rounded-[7px] bg-current" />
      </button>
      <button aria-label="Accueil" className="flex w-[233px] justify-center">
        <span className="flex h-[54px] w-[54px] items-center justify-center rounded-full border-[5px] border-current">
          <span className="h-[30px] w-[30px] rounded-full bg-current" />
        </span>
      </button>
      <button aria-label="Retour" className="flex w-[233px] justify-center">
        <svg className="h-[46px] w-[37px]" viewBox="0 0 37 46" fill="currentColor" stroke="currentColor" strokeWidth="4" strokeLinejoin="round">
          <path d="M35 2V44L2 23z" />
        </svg>
      </button>
    </nav>
  );
}

export default function App() {
  return (
    <div className="relative flex min-h-screen flex-col overflow-hidden bg-black font-['Roboto',sans-serif]">
      <StatusBar />
      <div className="flex flex-1">
        <LayerDrawer />
        <MapPane />
      </div>
      <Menu />
      <NavBar />
    </div>
  );
}
